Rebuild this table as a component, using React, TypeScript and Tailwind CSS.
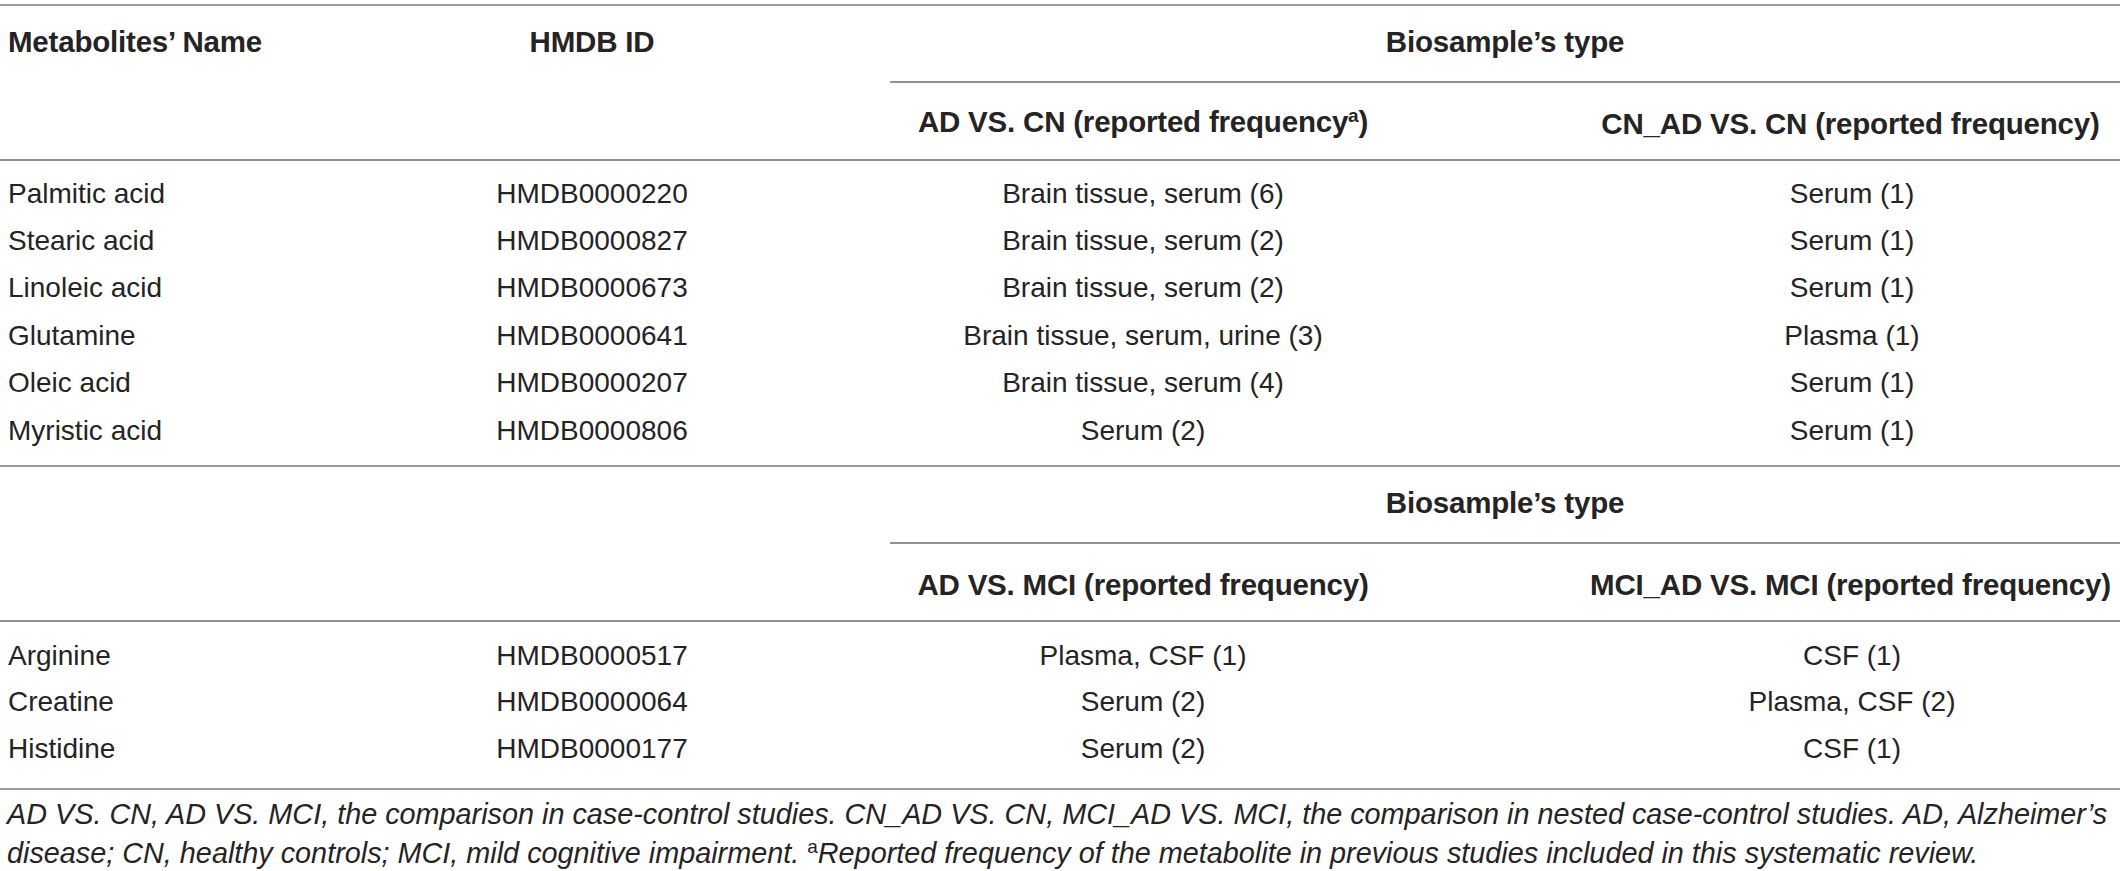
import React from 'react';

const firstRows = [
  ['Palmitic acid', 'HMDB0000220', 'Brain tissue, serum (6)', 'Serum (1)'],
  ['Stearic acid', 'HMDB0000827', 'Brain tissue, serum (2)', 'Serum (1)'],
  ['Linoleic acid', 'HMDB0000673', 'Brain tissue, serum (2)', 'Serum (1)'],
  ['Glutamine', 'HMDB0000641', 'Brain tissue, serum, urine (3)', 'Plasma (1)'],
  ['Oleic acid', 'HMDB0000207', 'Brain tissue, serum (4)', 'Serum (1)'],
  ['Myristic acid', 'HMDB0000806', 'Serum (2)', 'Serum (1)'],
];

const secondRows = [
  ['Arginine', 'HMDB0000517', 'Plasma, CSF (1)', 'CSF (1)'],
  ['Creatine', 'HMDB0000064', 'Serum (2)', 'Plasma, CSF (2)'],
  ['Histidine', 'HMDB0000177', 'Serum (2)', 'CSF (1)'],
];

const cols = 'grid grid-cols-[482px_220px_882px_536px]';

function DataRows({ rows, rowClass }: { rows: string[][]; rowClass: string }) {
  return (
    <>
      {rows.map((r) => (
        <div key={r[0]} className={`${cols} ${rowClass} items-center whitespace-nowrap`}>
          <div className="pl-[8px]">{r[0]}</div>
          <div className="text-center">{r[1]}</div>
          <div className="text-center">{r[2]}</div>
          <div className="text-center">{r[3]}</div>
        </div>
      ))}
    </>
  );
}

function Header({ left, third, fourth }: { left: boolean; third: React.ReactNode; fourth: React.ReactNode }) {
  return (
    <div className={`${cols} text-[29.5px] font-bold tracking-[-0.2px] whitespace-nowrap`}>
      <div className="row-span-2 pl-[8px] pt-[20px]">{left ? 'Metabolites’ Name' : ''}</div>
      <div className="row-span-2 pt-[20px] text-center">{left ? 'HMDB ID' : ''}</div>
      <div className="col-span-2 pl-[188px]">
        <div className="flex h-[77px] items-center justify-center border-b-2 border-[#929292] pb-[3px]">
          Biosample’s type
        </div>
      </div>
      <div className="flex h-[76px] items-center justify-center pt-[6px]">{third}</div>
      <div className="flex h-[76px] items-center justify-center pt-[6px] pr-[3px]">{fourth}</div>
    </div>
  );
}

export default function App() {
  return (
    <div className="min-h-[871px] w-[2120px] bg-white pt-[4px] font-['Liberation_Sans',Arial,sans-serif] text-[28px] leading-[32px] text-[#262324]">
      <div className="border-t-2 border-[#9a9a9a]">
        <Header
          left
          third={
            <span>
              AD VS. CN (reported frequency<span className="relative -top-[10px] text-[19px]">a</span>)
            </span>
          }
          fourth="CN_AD VS. CN (reported frequency)"
        />
      </div>
      <div className="border-t-2 border-[#929292] pt-[9px] pb-[11px]">
        <DataRows rows={firstRows} rowClass="h-[47.4px]" />
      </div>
      <div className="border-t-2 border-[#9a9a9a]">
        <Header left={false} third="AD VS. MCI (reported frequency)" fourth="MCI_AD VS. MCI (reported frequency)" />
      </div>
      <div className="border-t-2 border-[#929292] pt-[10px] pb-[16px]">
        <DataRows rows={secondRows} rowClass="h-[46.5px]" />
      </div>
      <div className="border-t-2 border-[#9a9a9a] pl-[7px] pt-[5px] text-[28.8px] italic leading-[39px] whitespace-nowrap">
        <p>
          AD VS. CN, AD VS. MCI, the comparison in case-control studies. CN_AD VS. CN, MCI_AD VS. MCI, the comparison in
          nested case-control studies. AD, Alzheimer’s
        </p>
        <p>
          disease; CN, healthy controls; MCI, mild cognitive impairment.{' '}
          <span className="relative -top-[10px] text-[19px] not-italic">a</span>Reported frequency of the metabolite in
          previous studies included in this systematic review.
        </p>
      </div>
    </div>
  );
}
